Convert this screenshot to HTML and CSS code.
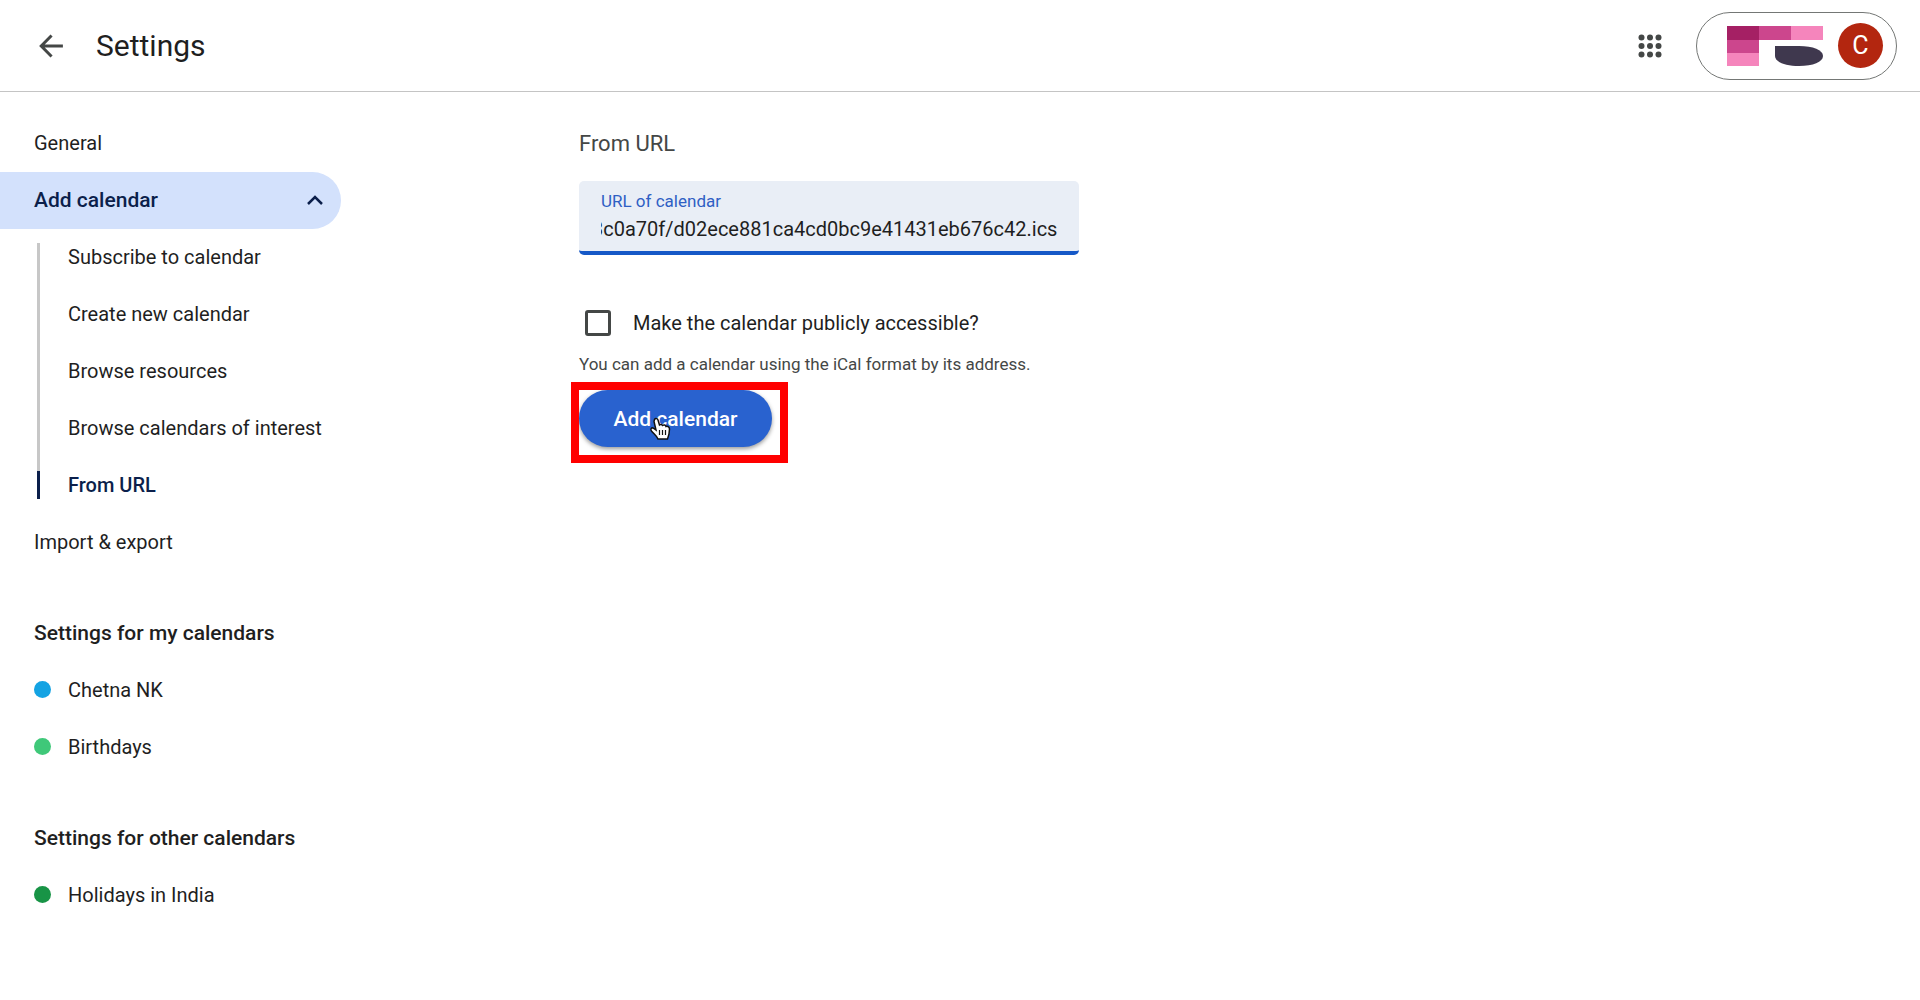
FILE: index.html
```html
<!DOCTYPE html>
<html lang="en">
<head>
    <meta charset="UTF-8">
    <meta name="viewport" content="width=device-width, initial-scale=1">
    <title>Settings</title>
    <link rel="stylesheet" href="styles.css">
</head>
<body>
    <header class="header">
        <button type="button" class="back-btn" aria-label="Back">
            <svg width="34" height="34" viewBox="0 0 24 24"><path d="M20.400 12H5.400M12.400 4.600L5.100 12L12.400 19.400" fill="none" stroke="#444746" stroke-width="2.100"/></svg>
        </button>
        <h1>Settings</h1>
        <button type="button" class="apps-btn" aria-label="Apps">
            <svg width="24" height="24" viewBox="0 0 24 24" fill="#444746">
                <circle cx="3.500" cy="3.500" r="3"/><circle cx="12" cy="3.500" r="3"/><circle cx="20.500" cy="3.500" r="3"/>
                <circle cx="3.500" cy="12" r="3"/><circle cx="12" cy="12" r="3"/><circle cx="20.500" cy="12" r="3"/>
                <circle cx="3.500" cy="20.500" r="3"/><circle cx="12" cy="20.500" r="3"/><circle cx="20.500" cy="20.500" r="3"/>
            </svg>
        </button>
        <button type="button" class="account">
            <svg width="96" height="40" viewBox="0 0 96 40">
                <rect width="32" height="14" fill="#a52064"/>
                <rect x="32" width="32" height="14" fill="#cc468d"/>
                <rect x="64" width="32" height="14" fill="#f585bc"/>
                <rect y="14" width="32" height="13" fill="#cc468d"/>
                <rect y="27" width="32" height="13" fill="#f585bc"/>
                <path d="M48 20H72C86 20 96 24 96 30C96 36 86 40 72 40C58 40 48 36 48 30Z" fill="#3f384e"/>
            </svg>
            <span class="avatar">C</span>
        </button>
    </header>

    <div class="page">
        <nav class="sidebar">
            <a href="#" class="item">General</a>
            <a href="#" class="item open">
                Add calendar
                <svg width="16" height="10" viewBox="0 0 16 10"><path d="M1 9L8 2L15 9" fill="none" stroke="#0b1f4b" stroke-width="2.500"/></svg>
            </a>
            <div class="submenu">
                <a href="#" class="item">Subscribe to calendar</a>
                <a href="#" class="item">Create new calendar</a>
                <a href="#" class="item">Browse resources</a>
                <a href="#" class="item">Browse calendars of interest</a>
                <a href="#" class="item current">From URL</a>
            </div>
            <a href="#" class="item">Import &amp; export</a>

            <h2>Settings for my calendars</h2>
            <a href="#" class="item"><span class="dot blue"></span>Chetna NK</a>
            <a href="#" class="item"><span class="dot green"></span>Birthdays</a>

            <h2>Settings for other calendars</h2>
            <a href="#" class="item"><span class="dot dark-green"></span>Holidays in India</a>
        </nav>

        <main class="content">
            <h2 class="title">From URL</h2>
            <form>
                <div class="field">
                    <label for="url">URL of calendar</label>
                    <input type="text" id="url" value="3c0a70f/d02ece881ca4cd0bc9e41431eb676c42.ics">
                </div>
                <div class="check">
                    <input type="checkbox" id="public">
                    <label for="public">Make the calendar publicly accessible?</label>
                </div>
                <p class="hint">You can add a calendar using the iCal format by its address.</p>
                <div class="action">
                    <button type="button" class="add-btn">Add calendar</button>
                    <div class="highlight"></div>
                    <svg class="cursor" width="22" height="24" viewBox="0 0 22 24">
                        <path d="M5.500 2.500C6.500 1 8.500 1.500 9 3L10.500 8C12 7 13 7.500 13.500 8.500C15 7.500 16.500 8 17 9.500C19 9 20.500 10 20.500 12C20.500 16 20 18 18.500 22H9C8 19 5 17 2.500 14C1 12 2.500 10.500 4 11L7 13L5 4.500Z" fill="#fff" stroke="#111" stroke-width="1.500"/>
                        <path d="M10.500 13V18M13.500 13V18M16.500 13V18" stroke="#111" stroke-width="1.200"/>
                    </svg>
                </div>
            </form>
        </main>
    </div>
    <script>
        // show the end of a long address
        let url = document.getElementById("url");
        url.scrollLeft = url.scrollWidth;
    </script>
</body>
</html>
```

FILE: styles.css
```css
* {
    box-sizing: border-box;
}
body {
    margin: 0;
    font-family: Roboto, "Open Sans", sans-serif;
    font-size: 20px;
    line-height: 28px;
    color: #1f1f1f;
    background: #fff;
}
h1, h2, p {
    margin: 0;
    font-weight: 400;
}
button, input {
    font: inherit;
    color: inherit;
}
button {
    border: none;
    background: none;
    padding: 0;
    cursor: pointer;
}
svg {
    display: block;
}

.header {
    display: flex;
    align-items: center;
    height: 92px;
    padding: 0 23px 0 34px;
    border-bottom: 1px solid #c4c4c4;
}
.header h1 {
    margin-left: 28px;
    font-size: 30px;
    line-height: 40px;
}
.apps-btn {
    margin-left: auto;
    margin-right: 34px;
}
.account {
    display: flex;
    align-items: center;
    gap: 15px;
    height: 68px;
    padding: 0 13px 0 30px;
    border: 1px solid #747775;
    border-radius: 34px;
}
.avatar {
    width: 45px;
    height: 45px;
    border-radius: 50%;
    background: #b3260f;
    color: #fff;
    font-size: 25px;
    line-height: 45px;
}

.page {
    display: flex;
    padding-top: 23px;
}
.sidebar {
    flex: 0 0 341px;
}
.item, .sidebar h2 {
    display: flex;
    align-items: center;
    height: 57px;
    padding-left: 34px;
    padding-bottom: 2px;
    color: #1f1f1f;
    text-decoration: none;
}
.sidebar h2 {
    margin-top: 34px;
    font-size: 21px;
    font-weight: 500;
}
.item.open {
    justify-content: space-between;
    padding-right: 18px;
    border-radius: 0 29px 29px 0;
    background: #d3e1fc;
    color: #0b1f4b;
    font-size: 21px;
    font-weight: 500;
}
.submenu {
    position: relative;
}
.submenu .item {
    padding-left: 68px;
}
.submenu::before, .submenu .current::before {
    content: "";
    position: absolute;
    left: 37px;
    width: 3px;
}
.submenu::before {
    top: 14px;
    bottom: 15px;
    background: #c7c7c7;
}
.submenu .current {
    color: #0b1f4b;
    font-weight: 500;
}
.submenu .current::before {
    bottom: 15px;
    height: 28px;
    background: #0b1f4b;
}
.dot {
    width: 17px;
    height: 17px;
    margin-right: 17px;
    border-radius: 50%;
}
.blue {
    background: #14a3e3;
}
.green {
    background: #3fc879;
}
.dark-green {
    background: #189446;
}

.content {
    flex: 1;
    margin-left: 238px;
    padding-top: 15px;
}
.title {
    font-size: 22px;
    color: #444746;
}
.field {
    display: flex;
    flex-direction: column;
    max-width: 500px;
    height: 74px;
    margin-top: 23px;
    padding: 8px 22px 0;
    border-bottom: 4px solid #1558c7;
    border-radius: 5px;
    background: #e9eef6;
}
.field label {
    font-size: 17px;
    line-height: 24px;
    color: #2f5fc4;
}
.field input {
    width: 100%;
    height: 32px;
    padding: 0;
    border: none;
    outline: none;
    background: none;
}
.check {
    display: flex;
    align-items: center;
    margin-top: 54px;
    padding-left: 6px;
}
.check input {
    appearance: none;
    width: 26px;
    height: 26px;
    margin: 0 22px 0 0;
    border: 3px solid #444746;
    border-radius: 3px;
}
.hint {
    margin-top: 15px;
    font-size: 17px;
    line-height: 24px;
    color: #444746;
}
.action {
    position: relative;
    width: 193px;
    margin-top: 14px;
}
.add-btn {
    width: 100%;
    height: 57px;
    border-radius: 29px;
    background: #2962cf;
    color: #fff;
    font-size: 21px;
    font-weight: 500;
    box-shadow: 0 2px 4px rgba(0, 0, 0, 0.4);
}
.highlight {
    position: absolute;
    top: -8px;
    right: -16px;
    bottom: -16px;
    left: -8px;
    border: 8px solid #f00;
    pointer-events: none;
}
.cursor {
    position: absolute;
    top: 27px;
    left: 70px;
    pointer-events: none;
}
```
